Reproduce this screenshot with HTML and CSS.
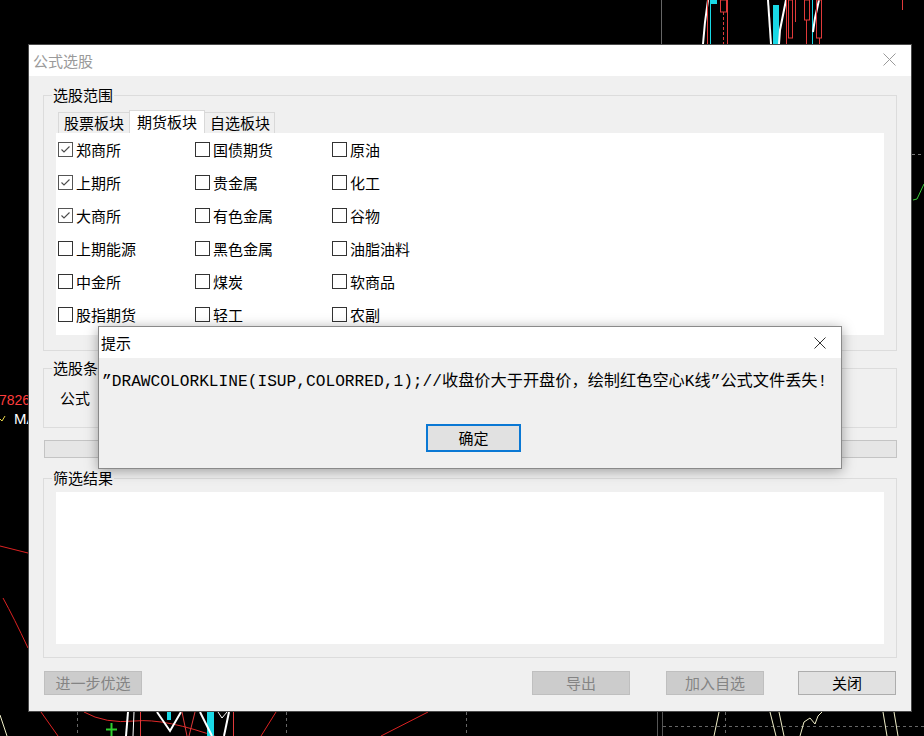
FILE: index.html
```html
<!DOCTYPE html>
<html lang="zh-CN">
<head>
<meta charset="utf-8">
<title>公式选股</title>
<link rel="stylesheet" href="styles.css">
</head>
<body>
<svg class="chart" width="924" height="736" viewBox="0 0 924 736">
  <rect width="924" height="736" fill="#000"/>
  <!-- top area -->
  <line x1="661.5" y1="0" x2="661.5" y2="44" stroke="#666"/>
  <polyline points="703,44 705,22 708,0" fill="none" stroke="#fff" stroke-width="2"/>
  <line x1="707.5" y1="0" x2="707.5" y2="44" stroke="#e03a3a"/>
  <line x1="710.5" y1="0" x2="710.5" y2="44" stroke="#19d9e6"/>
  <rect x="711" y="0" width="6" height="4" fill="#19d9e6"/>
  <rect x="720.5" y="0" width="6" height="12" fill="none" stroke="#e03a3a"/>
  <line x1="723.5" y1="12" x2="723.5" y2="44" stroke="#e03a3a" stroke-dasharray="3 2"/>
  <line x1="727.5" y1="0" x2="727.5" y2="44" stroke="#e03a3a"/>
  <polyline points="768,0 771,44" fill="none" stroke="#fff" stroke-width="2"/>
  <rect x="773" y="5" width="6" height="39" fill="#19d9e6"/>
  <polyline points="786,0 780,30 779,44" fill="none" stroke="#fff" stroke-width="2"/>
  <line x1="786.5" y1="0" x2="786.5" y2="44" stroke="#e03a3a"/>
  <rect x="788.5" y="0" width="4" height="38" fill="none" stroke="#e03a3a"/>
  <line x1="795.5" y1="0" x2="795.5" y2="22" stroke="#e03a3a"/>
  <rect x="804.5" y="0" width="5" height="20" fill="none" stroke="#e03a3a"/>
  <line x1="806.5" y1="20" x2="806.5" y2="44" stroke="#e03a3a"/>
  <line x1="812.5" y1="0" x2="812.5" y2="44" stroke="#19d9e6"/>
  <polyline points="819,0 815,18 813,32" fill="none" stroke="#fff" stroke-width="2"/>
  <rect x="816.5" y="0" width="5" height="38" fill="none" stroke="#e03a3a"/>
  <line x1="819.5" y1="38" x2="819.5" y2="44" stroke="#e03a3a"/>
  <line x1="902.5" y1="0" x2="902.5" y2="10" stroke="#e03a3a"/>
  <!-- left strip -->
  <text x="-1" y="405" class="num">7826</text>
  <polyline points="0,419 2,421 5,416" fill="none" stroke="#e8d64a" stroke-width="1"/>
  <text x="14" y="424" class="ma">MA</text>
  <path d="M0,546 L28,553" stroke="#d22" fill="none"/>
  <path d="M3,598 Q14,618 28,648" stroke="#d22" fill="none"/>
  <!-- right strip -->
  <line x1="912" y1="154.5" x2="924" y2="154.5" stroke="#777" stroke-dasharray="3 3"/>
  <polyline points="913,200 917,199 924,184" fill="none" stroke="#3ccf3c"/>
  <!-- bottom -->
  <line x1="0" y1="715" x2="7" y2="736" stroke="#f1efc8"/>
  <line x1="41" y1="712" x2="58" y2="736" stroke="#d22"/>
  <line x1="77.5" y1="712" x2="77.5" y2="736" stroke="#666" stroke-dasharray="3 3"/>
  <path d="M84,712 Q105,724 135,721 Q165,718 220,738" stroke="#e02828" fill="none"/>
  <line x1="111.5" y1="723" x2="111.5" y2="736" stroke="#2fcf2f" stroke-width="2"/>
  <line x1="106" y1="729.5" x2="117" y2="729.5" stroke="#2fcf2f" stroke-width="2"/>
  <line x1="128" y1="712" x2="126" y2="736" stroke="#fff" stroke-width="2"/>
  <line x1="134" y1="712" x2="133" y2="736" stroke="#fff"/>
  <line x1="140.5" y1="712" x2="140.5" y2="736" stroke="#e03a3a"/>
  <polyline points="157,712 170,731 181,712" fill="none" stroke="#fff" stroke-width="2"/>
  <rect x="167" y="712" width="4" height="8" fill="#19d9e6"/>
  <line x1="182" y1="712" x2="187" y2="736" stroke="#e03a3a"/>
  <line x1="195" y1="712" x2="189" y2="736" stroke="#e03a3a"/>
  <rect x="207" y="712" width="7" height="24" fill="#19d9e6"/>
  <line x1="200" y1="712" x2="212" y2="736" stroke="#fff" stroke-width="2"/>
  <polyline points="218,712 222,718 227,712" fill="none" stroke="#fff"/>
  <line x1="229" y1="712" x2="224" y2="736" stroke="#fff" stroke-width="2"/>
  <line x1="233.5" y1="712" x2="233.5" y2="736" stroke="#e03a3a"/>
  <line x1="276" y1="712" x2="261" y2="736" stroke="#d22"/>
  <line x1="286.5" y1="712" x2="286.5" y2="736" stroke="#666" stroke-dasharray="3 3"/>
  <line x1="428" y1="712" x2="381" y2="736" stroke="#d22"/>
  <line x1="466.5" y1="712" x2="466.5" y2="736" stroke="#666" stroke-dasharray="3 3"/>
  <line x1="657.5" y1="712" x2="657.5" y2="736" stroke="#555"/>
  <line x1="662.5" y1="712" x2="662.5" y2="736" stroke="#555"/>
  <line x1="663" y1="726.5" x2="924" y2="726.5" stroke="#666" stroke-dasharray="3 3"/>
  <line x1="725.5" y1="712" x2="725.5" y2="736" stroke="#666" stroke-dasharray="3 3"/>
  <line x1="719" y1="712" x2="714" y2="736" stroke="#f1efc8"/>
  <line x1="770" y1="712" x2="776" y2="736" stroke="#f1efc8"/>
  <line x1="779" y1="712" x2="784" y2="736" stroke="#f1efc8"/>
  <polyline points="800,736 804,722 810,718 815,724 818,716 822,712" fill="none" stroke="#f1efc8"/>
  <line x1="883" y1="712" x2="887" y2="736" stroke="#f1efc8"/>
  <line x1="894" y1="712" x2="898" y2="736" stroke="#f1efc8"/>
</svg>

<div class="win main">
  <div class="titlebar">
    <span class="title">公式选股</span>
    <svg class="close close-main" width="13" height="13" viewBox="0 0 13 13"><path d="M0.5,0.5 L12.5,12.5 M12.5,0.5 L0.5,12.5" stroke="#9a9a9a" stroke-width="1" fill="none"/></svg>
  </div>
  <div class="body">
    <fieldset class="group g1">
      <legend>选股范围</legend>
      <div class="tabs">
        <div class="tab t1">股票板块</div>
        <div class="tab active">期货板块</div>
        <div class="tab t3">自选板块</div>
      </div>
      <div class="panel">
        <label class="item"><span class="cb on"><svg width="13" height="13" viewBox="0 0 13 13"><polyline points="2.5,6.5 5,9 10.5,3.5" fill="none" stroke="#4a4a4a" stroke-width="1.1"/></svg></span>郑商所</label>
        <label class="item"><span class="cb"></span>国债期货</label>
        <label class="item"><span class="cb"></span>原油</label>
        <label class="item"><span class="cb on"><svg width="13" height="13" viewBox="0 0 13 13"><polyline points="2.5,6.5 5,9 10.5,3.5" fill="none" stroke="#4a4a4a" stroke-width="1.1"/></svg></span>上期所</label>
        <label class="item"><span class="cb"></span>贵金属</label>
        <label class="item"><span class="cb"></span>化工</label>
        <label class="item"><span class="cb on"><svg width="13" height="13" viewBox="0 0 13 13"><polyline points="2.5,6.5 5,9 10.5,3.5" fill="none" stroke="#4a4a4a" stroke-width="1.1"/></svg></span>大商所</label>
        <label class="item"><span class="cb"></span>有色金属</label>
        <label class="item"><span class="cb"></span>谷物</label>
        <label class="item"><span class="cb"></span>上期能源</label>
        <label class="item"><span class="cb"></span>黑色金属</label>
        <label class="item"><span class="cb"></span>油脂油料</label>
        <label class="item"><span class="cb"></span>中金所</label>
        <label class="item"><span class="cb"></span>煤炭</label>
        <label class="item"><span class="cb"></span>软商品</label>
        <label class="item"><span class="cb"></span>股指期货</label>
        <label class="item"><span class="cb"></span>轻工</label>
        <label class="item"><span class="cb"></span>农副</label>
      </div>
    </fieldset>
    <fieldset class="group g2">
      <legend>选股条件</legend>
      <div class="cond">公式</div>
    </fieldset>
    <div class="progress"></div>
    <fieldset class="group g3">
      <legend>筛选结果</legend>
      <div class="results"></div>
    </fieldset>
    <div class="buttons">
      <div class="btn disabled">进一步优选</div>
      <div class="btn disabled export">导出</div>
      <div class="btn disabled">加入自选</div>
      <div class="btn">关闭</div>
    </div>
  </div>
</div>

<div class="win dialog">
  <div class="titlebar dtitle">
    <span class="title dark">提示</span>
    <svg class="close close-dlg" width="12" height="12" viewBox="0 0 12 12"><path d="M0.5,0.5 L11.5,11.5 M11.5,0.5 L0.5,11.5" stroke="#333" stroke-width="1" fill="none"/></svg>
  </div>
  <div class="dbody">
    <div class="msg">”DRAWCOLORKLINE(ISUP,COLORRED,1);//收盘价大于开盘价，绘制红色空心K线”公式文件丢失!</div>
    <div class="drow"><div class="dbtn">确定</div></div>
  </div>
</div>
</body>
</html>
```

FILE: styles.css
```css
* { box-sizing: border-box; }

html, body {
  margin: 0;
  padding: 0;
}

body {
  width: 924px;
  height: 736px;
  overflow: hidden;
  background: #000;
  position: relative;
  font-family: "Noto Sans CJK SC", "Microsoft YaHei", sans-serif;
  font-size: 15px;
  color: #000;
}

.chart {
  position: absolute;
  left: 0;
  top: 0;
  display: block;
}

.chart .num {
  font-family: "Liberation Sans", Arial, sans-serif;
  font-size: 14px;
  fill: #ff3d3d;
}

.chart .ma {
  font-family: "Liberation Sans", Arial, sans-serif;
  font-size: 15px;
  fill: #fff;
}

.win {
  position: absolute;
  background: #f0f0f0;
  overflow: hidden;
}

.main {
  left: 28px;
  top: 44px;
  width: 884px;
  height: 668px;
  border: 1px solid #4a4a4a;
}

.titlebar {
  height: 31px;
  background: #fff;
  display: flex;
  align-items: center;
  justify-content: space-between;
}

.title {
  padding-left: 4px;
  color: #9a9a9a;
  line-height: 29px;
}

.title.dark {
  color: #000;
  padding-left: 2px;
  line-height: 31px;
}

.close {
  display: block;
}

.close-main {
  margin-right: 15px;
  margin-top: -2px;
}

.close-dlg {
  margin-right: 15px;
}

.body {
  display: flex;
  flex-direction: column;
}

.group {
  margin: 0 14px;
  padding: 0 12px;
  border: 1px solid #dcdcdc;
  min-width: 0;
}

.group legend {
  margin-left: -4px;
  padding: 0 1px;
  line-height: 19px;
  height: 20px;
  font-size: 15px;
}

.g1 {
  margin-top: 9px;
  padding-bottom: 15px;
}

.tabs {
  display: flex;
  align-items: flex-end;
  margin-top: 5px;
  padding-left: 2px;
  height: 23px;
}

.tab {
  height: 21px;
  line-height: 19px;
  padding: 0 5px;
  border: 1px solid #d9d9d9;
  border-bottom: none;
  background: #f0f0f0;
  white-space: nowrap;
}

.tab.active {
  height: 23px;
  line-height: 21px;
  padding: 0 7px;
  margin-left: -1px;
  background: #fff;
  position: relative;
  z-index: 1;
}

.tab.t3 {
  margin-left: -1px;
  padding: 0 4px 0 5px;
}

.panel {
  background: #fff;
  height: 202px;
  padding: 0 2px 4px;
  display: grid;
  grid-template-columns: 137px 137px 137px;
  grid-auto-rows: 33px;
}

.item {
  display: flex;
  align-items: center;
  gap: 3px;
  white-space: nowrap;
  line-height: 20px;
}

.cb {
  width: 15px;
  height: 15px;
  border: 1px solid #333;
  background: #fff;
  flex: none;
  display: flex;
  align-items: center;
  justify-content: center;
}

.cb.on {
  border-color: #555;
}

.cb svg {
  display: block;
}

.g2 {
  margin-top: 7px;
  padding-top: 10px;
  padding-bottom: 19px;
}

.cond {
  margin-left: 4px;
  line-height: 20px;
  height: 20px;
}

.progress {
  margin: 12px 14px 0 15px;
  height: 18px;
  border: 1px solid #c4c4c4;
  background: #e6e6e6;
}

.g3 {
  margin-top: 10px;
  padding-top: 4px;
  padding-bottom: 13px;
}

.results {
  height: 152px;
  background: #fff;
}

.buttons {
  display: flex;
  margin-top: 13px;
  padding: 0 15px;
  gap: 36px;
}

.btn {
  width: 98px;
  height: 24px;
  line-height: 22px;
  text-align: center;
  border: 1px solid #adadad;
  background: #e1e1e1;
  color: #000;
}

.btn.disabled {
  background: #cccccc;
  border-color: #bfbfbf;
  color: #848484;
}

.btn.export {
  margin-left: auto;
}

.buttons .btn:last-child {
  margin-left: -2px;
}

.dialog {
  left: 98px;
  top: 326px;
  width: 744px;
  height: 143px;
  border: 1px solid #8a8a8a;
  box-shadow: 0 2px 12px rgba(0, 0, 0, 0.35);
  z-index: 5;
}

.dtitle {
  height: 31px;
}

.dbody {
  padding: 14px 0 0 3px;
}

.msg {
  font-family: "Liberation Mono", "Noto Sans CJK SC", monospace;
  font-size: 16.2px;
  line-height: 20px;
  white-space: nowrap;
}

.drow {
  display: flex;
  justify-content: center;
  margin-top: 32px;
  padding-left: 4px;
}

.dbtn {
  width: 95px;
  height: 28px;
  line-height: 24px;
  text-align: center;
  border: 2px solid #0a78d4;
  background: #e1e1e1;
  font-size: 15px;
}
```
